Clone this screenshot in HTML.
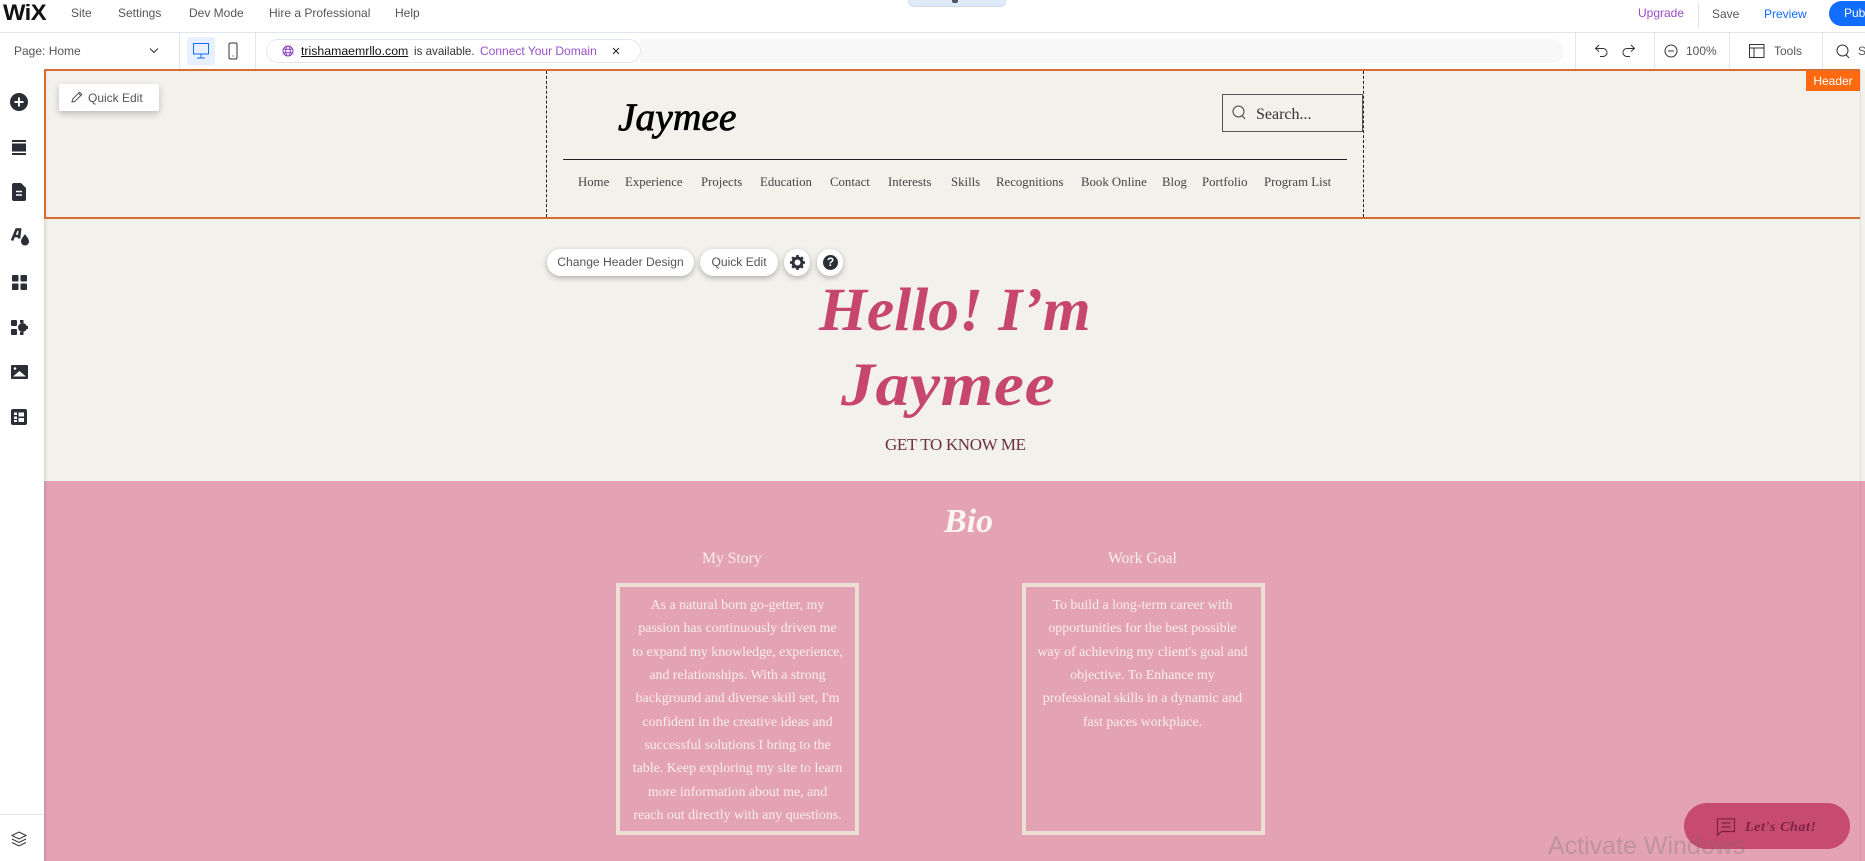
<!DOCTYPE html>
<html>
<head>
<meta charset="utf-8">
<title>Wix Editor</title>
<style>
html,body{margin:0;padding:0;width:1865px;height:861px;overflow:hidden;background:#fff}
body{position:relative;font-family:"Liberation Sans",sans-serif;color:#333}
.a{position:absolute;white-space:nowrap}
.ui{font-size:12px;line-height:16px;color:#555}
.nav{font-family:"Liberation Serif",serif;font-size:12.8px;line-height:16px;top:174px;color:#444}
.vd{position:absolute;width:1px;background:#dfe5eb}
.p{font-family:"Liberation Serif",serif;font-size:13.9px;line-height:16px;color:#f8eeea;text-align:center;width:243px}
.pill{position:absolute;background:#fff;border-radius:14px;box-shadow:0 2px 6px rgba(0,0,0,.28);font-size:12.1px;line-height:27px;color:#555;text-align:center}
svg{position:absolute;display:block;overflow:visible}
</style>
</head>
<body>
<!-- canvas -->
<div class="a" style="left:44px;top:70px;width:1821px;height:412px;background:#f3f1ec"></div>
<div class="a" style="left:44px;top:481px;width:1821px;height:380px;background:#e3a3b5"></div>
<div class="a" style="left:44px;top:70px;width:4px;height:791px;background:linear-gradient(90deg,rgba(0,0,0,.1),rgba(0,0,0,0))"></div>
<div class="a" style="left:1860px;top:70px;width:1px;height:791px;background:rgba(0,0,0,.08)"></div>

<!-- top bar -->
<div class="a" style="left:0;top:32px;width:1865px;height:1px;background:#dfe5eb"></div>
<div class="a" style="left:3px;top:0px;font-size:22px;line-height:26px;font-weight:bold;color:#111;letter-spacing:-.5px;transform:scaleX(1.08);transform-origin:left">WiX</div>
<div class="a ui" style="left:71px;top:5px">Site</div>
<div class="a ui" style="left:118px;top:5px">Settings</div>
<div class="a ui" style="left:189px;top:5px">Dev Mode</div>
<div class="a ui" style="left:269px;top:5px">Hire a Professional</div>
<div class="a ui" style="left:395px;top:5px">Help</div>
<div class="a" style="left:908px;top:0;width:96px;height:6px;background:#dfe9f7;border-radius:0 0 6px 6px;border:1px solid #cfdcee;border-top:0"></div>
<div class="a" style="left:952px;top:0;width:6px;height:3px;background:#556;border-radius:0 0 2px 2px"></div>
<div class="a ui" style="left:1638px;top:5px;color:#9a4fc8">Upgrade</div>
<div class="vd" style="left:1698px;top:3px;height:25px"></div>
<div class="a ui" style="left:1712px;top:6px">Save</div>
<div class="a ui" style="left:1764px;top:6px;color:#116dff">Preview</div>
<div class="a" style="left:1829px;top:1px;width:60px;height:25px;border-radius:13px;background:#116dff;color:#fff;font-size:12px;line-height:25px;padding-left:15px;box-sizing:border-box">Publish</div>

<!-- toolbar -->
<div class="a ui" style="left:14px;top:43px">Page: Home</div>
<svg style="left:148px;top:47px" width="12" height="8" viewBox="0 0 12 8"><path d="M2 1.500L6 5.500L10 1.500" fill="none" stroke="#333" stroke-width="1"/></svg>
<div class="vd" style="left:179px;top:33px;height:36px"></div>
<div class="a" style="left:187px;top:37px;width:28px;height:28px;background:#e7f0ff;border-radius:3px"></div>
<svg style="left:192px;top:42px" width="18" height="18" viewBox="0 0 18 18"><path d="M1.500 1.500h15v10.500h-15z M9 12v4 M5 16h8" fill="none" stroke="#116dff" stroke-width="1"/></svg>
<svg style="left:227px;top:42px" width="12" height="18" viewBox="0 0 12 18"><rect x="2" y="1" width="8" height="16" rx="1.500" fill="none" stroke="#333" stroke-width="1"/><path d="M5.500 14h1" stroke="#333"/></svg>
<div class="vd" style="left:255px;top:33px;height:36px"></div>
<div class="a" style="left:640px;top:39px;width:924px;height:24px;background:#f8f8f8;border-radius:0 12px 12px 0"></div>
<div class="a" style="left:266px;top:39px;width:373px;height:22px;border:1px solid #e3e7ec;border-radius:12px;background:#fff"></div>
<svg style="left:282px;top:45px" width="12" height="12" viewBox="0 0 12 12"><g fill="none" stroke="#8a3fc0" stroke-width="1"><circle cx="6" cy="6" r="5"/><ellipse cx="6" cy="6" rx="2.300" ry="5"/><path d="M1 4.200h10M1 7.800h10"/></g></svg>
<div class="a" style="left:301px;top:43px;font-size:12.3px;line-height:16px;color:#111;text-decoration:underline">trishamaemrllo.com</div>
<div class="a" style="left:414px;top:43px;font-size:11.6px;line-height:17px;color:#333">is available.</div>
<div class="a" style="left:480px;top:43px;font-size:12px;line-height:16px;color:#9a4fc8">Connect Your Domain</div>
<svg style="left:612px;top:47px" width="8" height="8" viewBox="0 0 8 8"><path d="M1 1L7 7M7 1L1 7" stroke="#222" stroke-width="1"/></svg>

<div class="vd" style="left:1575px;top:33px;height:36px"></div>
<svg style="left:1594px;top:44px" width="14" height="15" viewBox="0 0 14 15"><path d="M5 1L1.500 4.500L5 7.500M1.500 4.500H8.500a4 4 0 0 1 1 8H6" fill="none" stroke="#333" stroke-width="1"/></svg>
<svg style="left:1622px;top:44px" width="14" height="15" viewBox="0 0 14 15"><path d="M9 1L12.500 4.500L9 7.500M12.500 4.500H5.500a4 4 0 0 0 -1 8H8" fill="none" stroke="#333" stroke-width="1"/></svg>
<div class="vd" style="left:1654px;top:33px;height:36px"></div>
<svg style="left:1664px;top:44px" width="14" height="14" viewBox="0 0 14 14"><circle cx="7" cy="7" r="6" fill="none" stroke="#333"/><path d="M4 7h6" stroke="#333"/></svg>
<div class="a ui" style="left:1686px;top:43px">100%</div>
<div class="vd" style="left:1729px;top:33px;height:36px"></div>
<svg style="left:1749px;top:44px" width="16" height="14" viewBox="0 0 16 14"><path d="M.500.500h14.500v13H.500z M.500 4h14.500 M5 4v9.500" fill="none" stroke="#333"/></svg>
<div class="a ui" style="left:1774px;top:43px">Tools</div>
<div class="vd" style="left:1822px;top:33px;height:36px"></div>
<svg style="left:1836px;top:44px" width="14" height="15" viewBox="0 0 14 15"><circle cx="6.500" cy="6.500" r="5.500" fill="none" stroke="#333"/><path d="M10 10.500L13 14" stroke="#333"/></svg>
<div class="a ui" style="left:1858px;top:43px">Search</div>

<!-- side panel -->
<svg style="left:9px;top:92px" width="20" height="20" viewBox="0 0 20 20"><circle cx="10" cy="10" r="9" fill="#2b2e36"/><path d="M10 5.500v9M5.500 10h9" stroke="#fff" stroke-width="2"/></svg>
<svg style="left:11px;top:140px" width="16" height="16" viewBox="0 0 16 16"><path d="M1 0h14v2H1zM1 3.500h14v8H1zM1 13h14v2H1z" fill="#2b2e36"/></svg>
<svg style="left:12px;top:183px" width="14" height="18" viewBox="0 0 14 18"><path d="M2 0h7l5 5v11a2 2 0 0 1-2 2H2a2 2 0 0 1-2-2V2a2 2 0 0 1 2-2z" fill="#2b2e36"/><path d="M4 8.500h6M4 12h6" stroke="#fff" stroke-width="1.500"/></svg>
<svg style="left:11px;top:228px" width="19" height="18" viewBox="0 0 19 18"><path d="M1 12.500L5.500 1.500h3.500l-1 9M3.500 8h5" fill="none" stroke="#2b2e36" stroke-width="2.600"/><path d="M14 6c2 3 4 5 4 7.500a4 4 0 0 1-8 0c0-2.500 2-4.500 4-7.500z" fill="#2b2e36"/></svg>
<svg style="left:12px;top:275px" width="15" height="15" viewBox="0 0 15 15"><rect width="6.500" height="6.500" rx="1" fill="#2b2e36"/><rect x="8.500" width="6.500" height="6.500" rx="1" fill="#2b2e36"/><rect y="8.500" width="6.500" height="6.500" rx="1" fill="#2b2e36"/><rect x="8.500" y="8.500" width="6.500" height="6.500" rx="1" fill="#2b2e36"/></svg>
<svg style="left:10px;top:319px" width="18" height="17" viewBox="0 0 18 17"><rect x="1" y="1" width="6" height="6" rx="1" fill="#2b2e36"/><rect x="1" y="10" width="6" height="6" rx="1" fill="#2b2e36"/><circle cx="12.500" cy="8.500" r="4.500" fill="#2b2e36"/><path d="M10 1h3.500v3h-3.500zM10 13h3.500v3h-3.500zM15 7h3v3h-3z" fill="#2b2e36"/></svg>
<svg style="left:11px;top:365px" width="17" height="14" viewBox="0 0 17 14"><rect width="17" height="14" rx="1" fill="#2b2e36"/><path d="M2 11.500L8.500 6l6.500 5.500z" fill="#fff"/><circle cx="4" cy="3.500" r="1.300" fill="#fff"/></svg>
<svg style="left:11px;top:409px" width="16" height="16" viewBox="0 0 16 16"><rect width="16" height="16" rx="2" fill="#2b2e36"/><path d="M3 3.500h3v2.500H3zM3 7.500h3v2.500H3zM3 11h3v2H3zM7.500 3.500h5.500v4H7.500zM7.500 9h5.500v4H7.500z" fill="#fff"/></svg>
<div class="a" style="left:0;top:814px;width:44px;height:1px;background:#dfe5eb"></div>
<svg style="left:11px;top:831px" width="16" height="16" viewBox="0 0 16 16"><path d="M8 1l7 3.500-7 3.500-7-3.500zM1 8l7 3.500L15 8M1 11.500L8 15l7-3.500" fill="none" stroke="#333" stroke-width="1"/></svg>

<!-- header frame -->
<div class="a" style="left:44px;top:69px;width:1816px;height:150px;border:2px solid #d86f32;border-right:0;box-sizing:border-box"></div>
<div class="a" style="left:546px;top:71px;width:0;height:146px;border-left:1px dashed #222"></div>
<div class="a" style="left:1363px;top:71px;width:0;height:146px;border-left:1px dashed #222"></div>
<div class="a" style="left:1806px;top:71px;width:54px;height:20px;background:#ff6a10;color:#fff;font-size:12px;line-height:20px;text-align:center">Header</div>

<div class="a" style="left:59px;top:84px;width:100px;height:27px;background:#fff;border-radius:2px;box-shadow:0 3px 7px rgba(0,0,0,.22)"></div>
<svg style="left:71px;top:91px" width="12" height="12" viewBox="0 0 12 12"><path d="M1 11l.7-3L8.500 1.200l2.300 2.300L4 10.300z M7.500 2.300l2.300 2.300" fill="none" stroke="#444" stroke-width=".9"/></svg>
<div class="a ui" style="left:88px;top:90px">Quick Edit</div>

<div class="a" style="left:618px;top:94px;font-family:'Liberation Serif',serif;font-style:italic;font-size:39.500px;line-height:46px;color:#000;-webkit-text-stroke:.8px #000">Jaymee</div>

<div class="a" style="left:1222px;top:94px;width:141px;height:38px;border:1px solid #555;box-sizing:border-box"></div>
<svg style="left:1232px;top:105px" width="14" height="15" viewBox="0 0 14 15"><circle cx="6.500" cy="6.500" r="5.500" fill="none" stroke="#444"/><path d="M10 10.500L13 14" stroke="#444"/></svg>
<div class="a" style="left:1256px;top:105px;font-family:'Liberation Serif',serif;font-size:16px;line-height:20px;color:#333">Search...</div>

<div class="a" style="left:563px;top:159px;width:784px;height:1px;background:#222"></div>
<div class="a nav" style="left:578px">Home</div>
<div class="a nav" style="left:625px">Experience</div>
<div class="a nav" style="left:701px">Projects</div>
<div class="a nav" style="left:760px">Education</div>
<div class="a nav" style="left:830px">Contact</div>
<div class="a nav" style="left:888px">Interests</div>
<div class="a nav" style="left:951px">Skills</div>
<div class="a nav" style="left:996px">Recognitions</div>
<div class="a nav" style="left:1081px">Book Online</div>
<div class="a nav" style="left:1162px">Blog</div>
<div class="a nav" style="left:1202px">Portfolio</div>
<div class="a nav" style="left:1264px">Program List</div>

<!-- floating buttons -->
<div class="pill" style="left:547px;top:249px;width:147px;height:27px">Change Header Design</div>
<div class="pill" style="left:700px;top:249px;width:78px;height:27px">Quick Edit</div>
<div class="pill" style="left:784px;top:249px;width:26px;height:27px"></div>
<div class="pill" style="left:817px;top:249px;width:26px;height:27px"></div>
<svg style="left:790px;top:255px" width="15" height="15" viewBox="0 0 15 15"><circle cx="7.500" cy="7.500" r="4.500" fill="none" stroke="#2b2e36" stroke-width="3"/><path d="M7.500 0v3M7.500 12v3M0 7.500h3M12 7.500h3M2.200 2.200l2 2M10.800 10.800l2 2M12.800 2.200l-2 2M4.200 10.800l-2 2" stroke="#2b2e36" stroke-width="2.500"/></svg>
<div class="a" style="left:823px;top:255px;width:15px;height:15px;border-radius:50%;background:#2b2e36;color:#fff;font-size:12px;font-weight:bold;line-height:15px;text-align:center">?</div>

<!-- hero -->
<div class="a" style="left:819px;top:274px;font-family:'Liberation Serif',serif;font-style:italic;font-weight:bold;font-size:61.500px;line-height:72px;color:#c7466f">Hello! I’m</div>
<div class="a" style="left:841px;top:349px;font-family:'Liberation Serif',serif;font-style:italic;font-weight:bold;font-size:61.500px;line-height:72px;color:#c7466f;letter-spacing:.6px;transform:scaleX(1.1);transform-origin:left">Jaymee</div>
<div class="a" style="left:885px;top:434px;font-family:'Liberation Serif',serif;font-size:17px;line-height:22px;color:#6b2f42;letter-spacing:-.35px">GET TO KNOW ME</div>

<!-- bio -->
<div class="a" style="left:944px;top:502px;font-family:'Liberation Serif',serif;font-style:italic;font-weight:bold;font-size:34px;line-height:40px;color:#fdf5f2">Bio</div>
<div class="a" style="left:702px;top:549px;font-family:'Liberation Serif',serif;font-size:15.700px;line-height:20px;color:#f8eeea">My Story</div>
<div class="a" style="left:1108px;top:549px;font-family:'Liberation Serif',serif;font-size:15.700px;line-height:20px;color:#f8eeea">Work Goal</div>
<div class="a" style="left:616px;top:583px;width:243px;height:252px;border:4px solid #ecdfd3;box-sizing:border-box"></div>
<div class="a" style="left:1022px;top:583px;width:243px;height:252px;border:4px solid #ecdfd3;box-sizing:border-box"></div>

<div class="a p" style="left:616px;top:598px">As a natural born go-getter, my</div>
<div class="a p" style="left:616px;top:621px">passion has continuously driven me</div>
<div class="a p" style="left:616px;top:645px">to expand my knowledge, experience,</div>
<div class="a p" style="left:616px;top:668px">and relationships. With a strong</div>
<div class="a p" style="left:616px;top:691px">background and diverse skill set, I'm</div>
<div class="a p" style="left:616px;top:715px">confident in the creative ideas and</div>
<div class="a p" style="left:616px;top:738px">successful solutions I bring to the</div>
<div class="a p" style="left:616px;top:761px">table. Keep exploring my site to learn</div>
<div class="a p" style="left:616px;top:785px">more information about me, and</div>
<div class="a p" style="left:616px;top:808px">reach out directly with any questions.</div>

<div class="a p" style="left:1021px;top:598px">To build a long-term career with</div>
<div class="a p" style="left:1021px;top:621px">opportunities for the best possible</div>
<div class="a p" style="left:1021px;top:645px">way of achieving my client's goal and</div>
<div class="a p" style="left:1021px;top:668px">objective. To Enhance my</div>
<div class="a p" style="left:1021px;top:691px">professional skills in a dynamic and</div>
<div class="a p" style="left:1021px;top:715px">fast paces workplace.</div>

<!-- chat -->
<div class="a" style="left:1684px;top:803px;width:166px;height:46px;border-radius:23px;background:#c74a70"></div>
<svg style="left:1717px;top:818px" width="18" height="18" viewBox="0 0 18 18"><path d="M.500.800h17v12.700H4.500L.500 17.200z M4.500 5h9M4.500 9h9" fill="none" stroke="#7a2445" stroke-width="1.200"/></svg>
<div class="a" style="left:1745px;top:818px;font-family:'Liberation Serif',serif;font-style:italic;font-weight:bold;font-size:14px;line-height:20px;color:#7a2445;letter-spacing:.6px">Let's Chat!</div>
<div class="a" style="left:1548px;top:832px;font-size:25px;line-height:28px;color:rgba(110,110,110,.3)">Activate Windows</div>
</body>
</html>
